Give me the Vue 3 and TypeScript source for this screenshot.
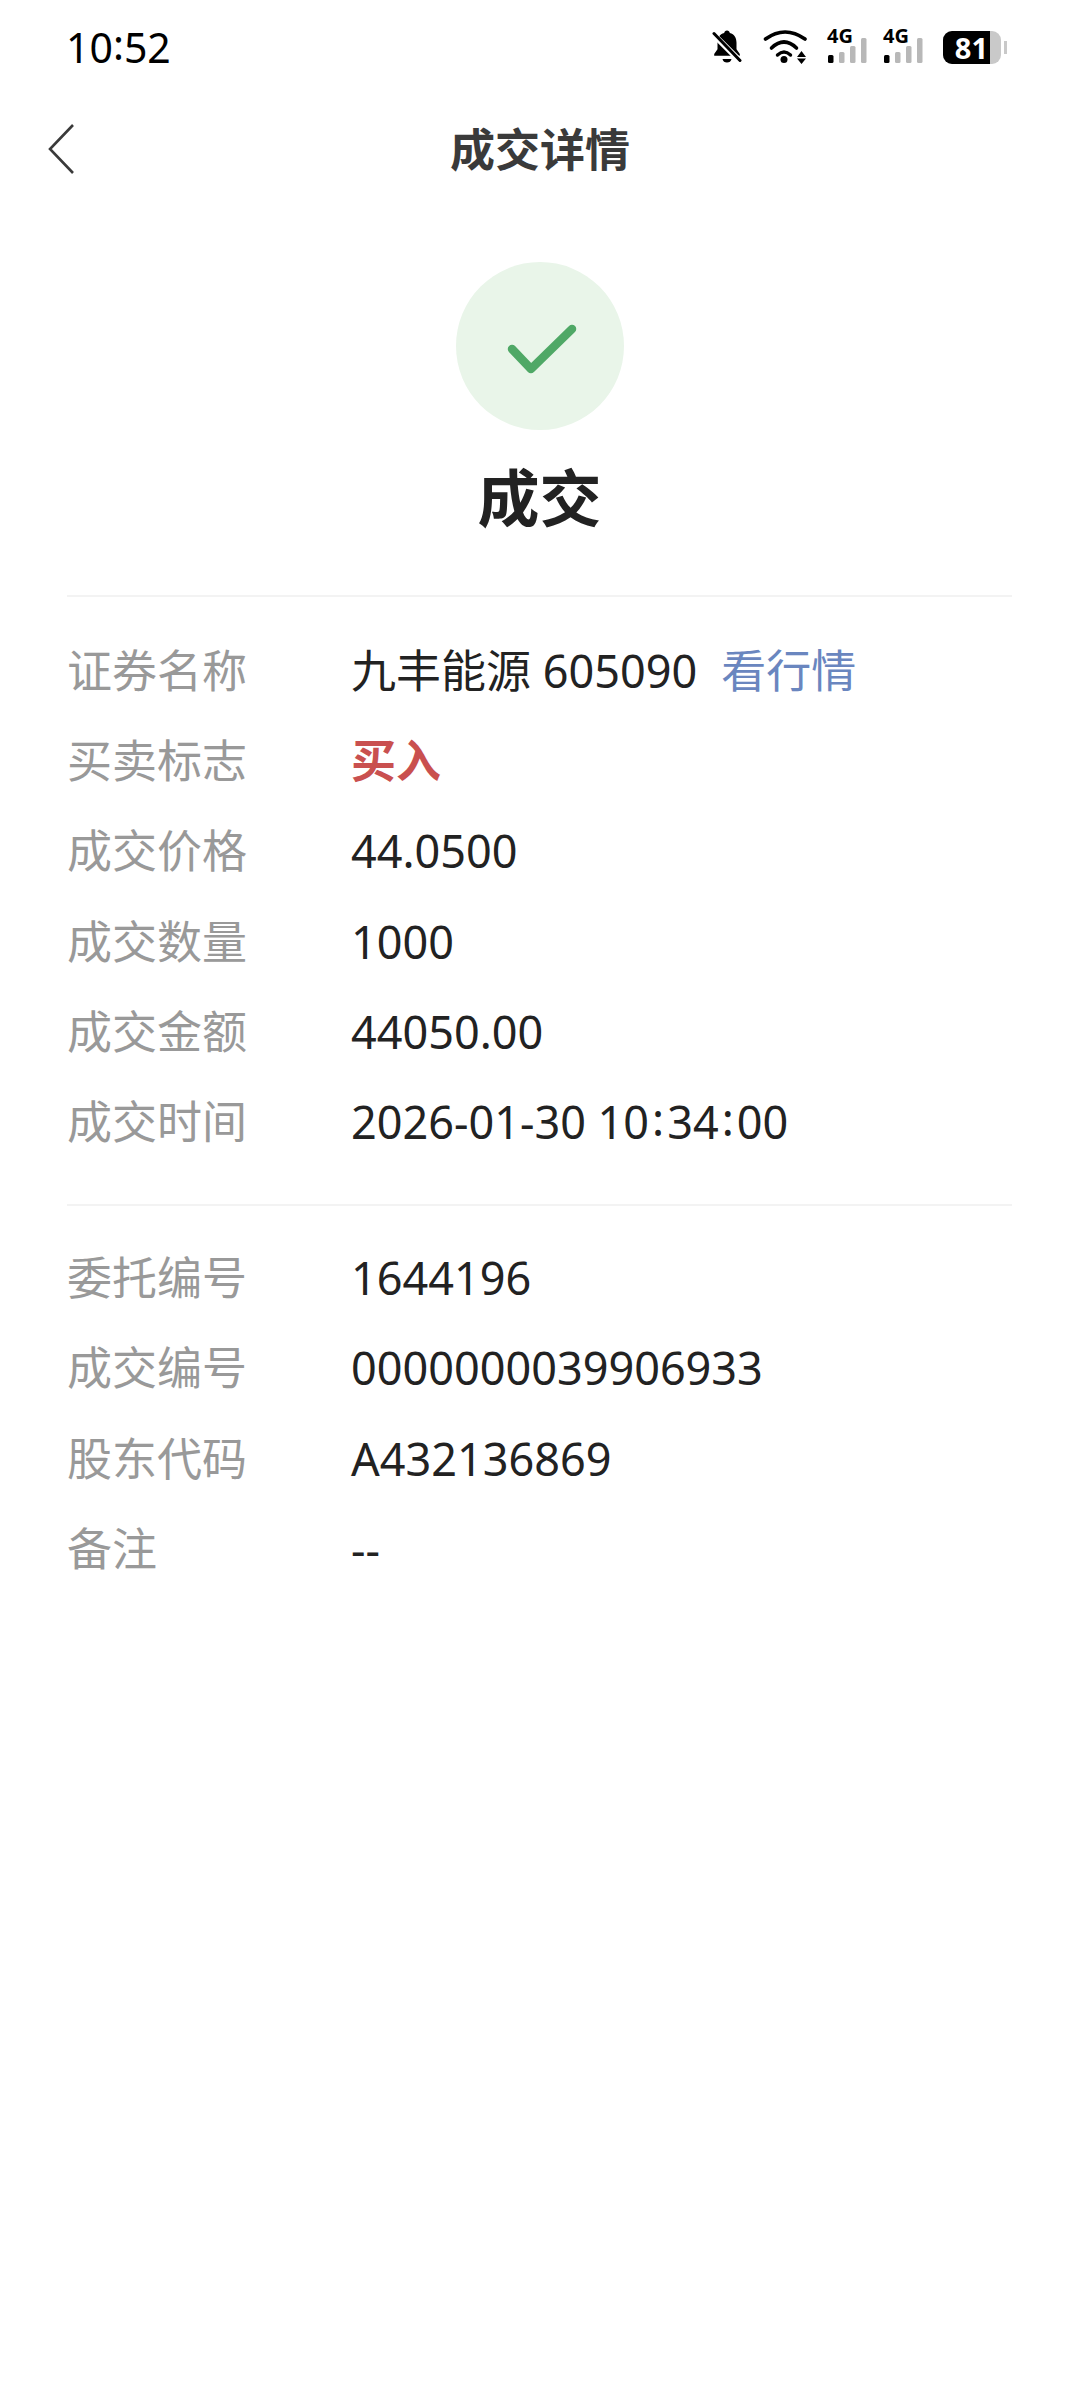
<script setup lang="ts">
interface Row { label: string; value: string }
const second: Row[] = [
  { label: '成交价格', value: '44.0500' },
  { label: '成交数量', value: '1000' },
  { label: '成交金额', value: '44050.00' },
]
const third: Row[] = [
  { label: '委托编号', value: '1644196' },
  { label: '成交编号', value: '0000000039906933' },
  { label: '股东代码', value: 'A432136869' },
  { label: '备注', value: '--' },
]
const signalBars = [0, 1]
</script>

<template>
  <div class="page">
    <div class="status">
      <span class="time">10<span class="colon">:</span>52</span>
      <div class="status-icons">
        <svg class="bell" width="30" height="36" viewBox="0 0 30 36">
          <path d="M15 1.5c1.6 0 2.6 1 2.8 2.6 4.6 1.2 6.7 5 6.7 9.6v6.6l3.3 4.7v1.7H2.2V25l3.3-4.7v-6.6c0-4.6 2.1-8.4 6.7-9.6.2-1.6 1.2-2.6 2.8-2.6Z" fill="#000"/>
          <path d="M10.5 30h9c-.4 2.3-2.2 3.6-4.5 3.6s-4.1-1.3-4.5-3.6Z" fill="#000"/>
          <path d="M1 5l27 27" stroke="#fff" stroke-width="6"/>
          <path d="M2 4.5l26 27" stroke="#000" stroke-width="3" stroke-linecap="round"/>
        </svg>
        <svg class="wifi" width="46" height="34" viewBox="0 0 46 34">
          <path d="M3.5 9Q23 -5 43 9" fill="none" stroke="#000" stroke-width="3.6" stroke-linecap="round"/>
          <path d="M9.5 18Q22 6 34.5 18" fill="none" stroke="#000" stroke-width="3.6" stroke-linecap="round"/>
          <path d="M15.5 25Q22 19 28.5 25" fill="none" stroke="#000" stroke-width="3.4" stroke-linecap="round"/>
          <circle cx="22" cy="29.5" r="3.5" fill="#000"/>
          <path d="M35 27l4.5-6 4.5 6ZM35 28.5h9l-4.5 5.5Z" fill="#000"/>
        </svg>
        <div v-for="s in signalBars" :key="s" class="signal">
          <span class="net">4G</span>
          <svg width="42" height="25" viewBox="0 0 42 25">
            <rect x="3" y="17" width="5.5" height="8" rx="1.5" fill="#000"/>
            <rect x="14" y="14" width="5.5" height="11" rx="1.5" fill="#b8b8b8"/>
            <rect x="25" y="8" width="5.5" height="17" rx="1.5" fill="#b8b8b8"/>
            <rect x="36" y="0" width="5.5" height="25" rx="1.5" fill="#b8b8b8"/>
          </svg>
        </div>
        <div class="battery">
          <div class="cell">
            <div class="level"><span>81</span></div>
          </div>
          <span class="nub"></span>
        </div>
      </div>
    </div>

    <header class="nav">
      <svg class="back" width="30" height="52" viewBox="0 0 30 52">
        <path d="M26 2 L3 26 L26 50" fill="none" stroke="#3a3a3a" stroke-width="2.6"/>
      </svg>
      <h1>成交详情</h1>
    </header>

    <section class="result">
      <div class="circle">
        <svg width="168" height="168" viewBox="0 0 168 168">
          <path d="M56 87 L75 107 L116 67" fill="none" stroke="#4fa866" stroke-width="8.5" stroke-linecap="round" stroke-linejoin="round"/>
        </svg>
      </div>
      <h2>成交</h2>
    </section>

    <section class="group first">
      <div class="row">
        <span class="label">证券名称</span>
        <span class="value">九丰能源 605090<a class="link">看行情</a></span>
      </div>
      <div class="row">
        <span class="label">买卖标志</span>
        <span class="value buy">买入</span>
      </div>
      <div v-for="r in second" :key="r.label" class="row">
        <span class="label">{{ r.label }}</span>
        <span class="value">{{ r.value }}</span>
      </div>
      <div class="row">
        <span class="label">成交时间</span>
        <span class="value">2026-01-30 10<span class="colon">:</span>34<span class="colon">:</span>00</span>
      </div>
    </section>

    <section class="group second">
      <div v-for="r in third" :key="r.label" class="row">
        <span class="label">{{ r.label }}</span>
        <span class="value">{{ r.value }}</span>
      </div>
    </section>
  </div>
</template>

<style>
html, body { background: #fff; }
</style>

<style scoped>
.page {
  width: 1080px;
  height: 2400px;
  background: #fff;
  font-family: "Noto Sans CJK SC", "Noto Sans", sans-serif;
  overflow: hidden;
}
.status {
  height: 94px;
  padding: 0 73px 0 66px;
  display: flex;
  align-items: center;
  justify-content: space-between;
}
.time {
  font-size: 41px;
  color: #000;
  line-height: 1;
  font-family: "Noto Sans", sans-serif;
}
.colon {
  display: inline-block;
  padding: 0 3px;
  transform: translateY(-3px);
}
.time .colon { padding: 0; }
.status-icons {
  display: flex;
  align-items: center;
}
.bell { margin-right: 20px; }
.wifi { margin-right: 17px; }
.signal {
  width: 42px;
  height: 35px;
  margin: 0 14px 3px 0;
  position: relative;
  display: flex;
  align-items: flex-end;
}
.net {
  position: absolute;
  top: -4px;
  left: 2px;
  font-size: 20px;
  line-height: 24px;
  font-weight: 700;
  color: #000;
  font-family: "Noto Sans", sans-serif;
}
.battery {
  display: flex;
  align-items: center;
  margin-left: 6px;
}
.cell {
  width: 58px;
  height: 33px;
  border-radius: 9px;
  background: #c9c9c9;
}
.level {
  width: 47px;
  height: 33px;
  background: #000;
  border-radius: 9px 0 0 9px;
  color: #fff;
  font-size: 29px;
  font-weight: 700;
  line-height: 33px;
  text-align: right;
  padding-right: 2px;
  box-sizing: border-box;
  font-family: "Noto Sans", sans-serif;
  white-space: nowrap;
}
.nub {
  width: 3px;
  height: 13px;
  margin-left: 3px;
  background: #c9c9c9;
}
.nav {
  height: 112px;
  padding-bottom: 6px;
  box-sizing: border-box;
  position: relative;
  display: flex;
  align-items: center;
  justify-content: center;
}
.back {
  position: absolute;
  left: 47px;
  top: 29px;
}
.nav h1 {
  margin: 0;
  font-size: 45px;
  font-weight: 700;
  color: #3a3a3a;
  line-height: 1;
}
.result {
  padding-top: 56px;
  height: 391px;
  box-sizing: border-box;
  display: flex;
  flex-direction: column;
  align-items: center;
  border-bottom: 2px solid #f3f3f3;
  margin: 0 68px 0 67px;
}
.circle {
  width: 168px;
  height: 168px;
  border-radius: 50%;
  background: #e9f5e9;
}
.circle svg { display: block; }
.result h2 {
  margin: 27px 0 0;
  font-size: 62px;
  font-weight: 700;
  color: #222;
  line-height: 76px;
}
.group {
  margin: 0 68px 0 67px;
  display: flex;
  flex-direction: column;
}
.group.first {
  padding: 27px 0 39px;
  border-bottom: 2px solid #f3f3f3;
}
.group.second {
  padding-top: 25px;
}
.row {
  height: 90.2px;
  line-height: 90.2px;
  display: flex;
  align-items: baseline;
  font-size: 45px;
}
.label {
  width: 284px;
  color: #999;
  flex: none;
}
.value {
  color: #222;
  font-family: "Noto Sans", "Noto Sans CJK SC", sans-serif;
}
.buy {
  color: #c9504f;
  font-weight: 700;
  font-family: "Noto Sans CJK SC", sans-serif;
}
.link {
  margin-left: 24px;
  color: #6a86bf;
}
</style>
